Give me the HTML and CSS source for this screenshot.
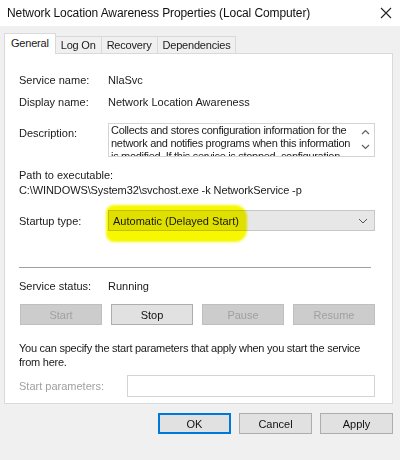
FILE: index.html
```html
<!DOCTYPE html>
<html lang="en">
<head>
    <meta charset="UTF-8">
    <title>Network Location Awareness Properties (Local Computer)</title>
    <link rel="stylesheet" href="styles.css">
</head>
<body>
    <div class="window">
        <div class="titlebar">
            <span class="title">Network Location Awareness Properties (Local Computer)</span>
            <svg class="close" width="12" height="12" viewBox="0 0 12 12">
                <path d="M1 1 L11 11 M11 1 L1 11" stroke="#222" stroke-width="1.1" fill="none"/>
            </svg>
        </div>

        <div class="tabs">
            <div class="tab active">General</div>
            <div class="tab">Log On</div>
            <div class="tab">Recovery</div>
            <div class="tab">Dependencies</div>
        </div>

        <div class="panel">
            <div class="row first">
                <span class="label">Service name:</span>
                <span>NlaSvc</span>
            </div>
            <div class="row">
                <span class="label">Display name:</span>
                <span>Network Location Awareness</span>
            </div>
            <div class="row desc-row">
                <span class="label desc-label">Description:</span>
                <div class="textbox">
                    <div class="textbox-text">Collects and stores configuration information for the network and notifies programs when this information is modified. If this service is stopped, configuration information might be unavailable.</div>
                    <div class="scroll">
                        <svg width="9" height="6" viewBox="0 0 9 6"><path d="M1 5 L4.5 1.5 L8 5" stroke="#606060" fill="none" stroke-width="1.2"/></svg>
                        <svg width="9" height="6" viewBox="0 0 9 6"><path d="M1 1 L4.5 4.5 L8 1" stroke="#606060" fill="none" stroke-width="1.2"/></svg>
                    </div>
                </div>
            </div>

            <div class="path-label">Path to executable:</div>
            <div class="path">C:\WINDOWS\System32\svchost.exe -k NetworkService -p</div>

            <div class="row startup-row">
                <span class="label">Startup type:</span>
                <div class="select">
                    <span>Automatic (Delayed Start)</span>
                    <svg width="10" height="6" viewBox="0 0 10 6"><path d="M1 1 L5 5 L9 1" stroke="#555" fill="none" stroke-width="1"/></svg>
                    <div class="marker"></div>
                </div>
            </div>

            <div class="separator"></div>

            <div class="row status-row">
                <span class="label">Service status:</span>
                <span>Running</span>
            </div>

            <div class="svc-buttons">
                <button class="btn" disabled>Start</button>
                <button class="btn">Stop</button>
                <button class="btn" disabled>Pause</button>
                <button class="btn" disabled>Resume</button>
            </div>

            <p class="hint">You can specify the start parameters that apply when you start the service from here.</p>

            <div class="row params-row">
                <span class="label params-label">Start parameters:</span>
                <div class="input"></div>
            </div>
        </div>

        <div class="footer">
            <button class="btn dlg default">OK</button>
            <button class="btn dlg">Cancel</button>
            <button class="btn dlg">Apply</button>
        </div>
    </div>
</body>
</html>
```

FILE: styles.css
```css
body {
    margin: 0;
    width: 400px;
    height: 460px;
    background-color: #f0f0f0;
    font-family: "Liberation Sans", Arial, sans-serif;
    font-size: 11px;
    color: #1a1a1a;
    overflow: hidden;
}

.titlebar {
    height: 26px;
    background-color: #fff;
    display: flex;
    align-items: center;
    padding: 0 8px 0 7px;
}

.title {
    flex: 1;
    font-size: 12px;
    letter-spacing: -0.1px;
    color: #111;
}

.tabs {
    display: flex;
    align-items: flex-end;
    margin: 7px 0 0 4px;
    height: 20px;
}

.tab {
    height: 17px;
    line-height: 16px;
    padding: 0 5px;
    letter-spacing: -0.2px;
    box-sizing: border-box;
    border: 1px solid #d9d9d9;
    border-bottom: none;
    margin-left: -1px;
    background-color: #f0f0f0;
}

.tab.active {
    height: 21px;
    margin-left: 0;
    margin-bottom: -1px;
    padding: 0 6px;
    background-color: #fff;
    position: relative;
    z-index: 1;
    line-height: 18px;
}

.panel {
    margin: 0 7px 0 4px;
    border: 1px solid #d9d9d9;
    background-color: #fff;
    padding: 18px 17px 27px 14px;
    height: 351px;
    box-sizing: border-box;
}

.row {
    display: flex;
    align-items: center;
    line-height: 16px;
}

.row + .row {
    margin-top: 6px;
}

.label {
    width: 89px;
    flex-shrink: 0;
}

.desc-row {
    align-items: flex-start;
    margin-top: 13px !important;
}

.desc-label {
    padding-top: 2px;
}

.textbox {
    flex: 1;
    height: 34px;
    box-sizing: border-box;
    border: 1px solid #d4d4d4;
    display: flex;
    overflow: hidden;
}

.textbox-text {
    flex: 1;
    padding: 0 2px 0 2px;
    line-height: 13px;
    letter-spacing: -0.3px;
    overflow: hidden;
}

.scroll {
    width: 18px;
    display: flex;
    flex-direction: column;
    align-items: center;
    justify-content: space-between;
    padding: 5px 0 6px;
    box-sizing: border-box;
}

.path-label {
    margin-top: 11px;
    line-height: 15px;
}

.path {
    line-height: 15px;
    letter-spacing: -0.1px;
}

.startup-row {
    margin-top: 12px;
}

.select {
    flex: 1;
    height: 21px;
    box-sizing: border-box;
    border: 1px solid #c7c7c7;
    background-color: #e7e7e7;
    display: flex;
    align-items: center;
    justify-content: space-between;
    padding: 0 6px 0 4px;
    position: relative;
}

/* highlighter stroke over the combo box */
.marker {
    position: absolute;
    left: -3px;
    top: -6px;
    width: 141px;
    height: 37px;
    border-radius: 8px 12px 12px 8px;
    background-color: #f7f700;
    mix-blend-mode: multiply;
    filter: blur(1px);
}

.separator {
    margin: 36px 4px 0 0;
    height: 1px;
    background-color: #a0a0a0;
}

.status-row {
    margin-top: 10px;
}

.svc-buttons {
    display: flex;
    gap: 9px;
    margin: 10px 0 0 1px;
}

.btn {
    font-family: inherit;
    font-size: 11px;
    color: #111;
    height: 21px;
    padding: 0;
    border: 1px solid #adadad;
    background-color: #e1e1e1;
}

.svc-buttons .btn {
    flex: 1;
}

.btn:disabled {
    color: #a0a0a0;
    border-color: #bfbfbf;
    background-color: #cccccc;
}

.hint {
    margin: 16px 0 0;
    line-height: 14px;
    letter-spacing: -0.25px;
}

.params-row {
    margin-top: 6px !important;
}

.params-label {
    width: 108px;
    color: #a0a0a0;
}

.input {
    flex: 1;
    height: 22px;
    box-sizing: border-box;
    border: 1px solid #d4d4d4;
}

.footer {
    display: flex;
    justify-content: flex-end;
    gap: 8px;
    margin: 9px 7px 0 0;
}

.btn.dlg {
    width: 73px;
}

.btn.default {
    border: 2px solid #0078d7;
}
```
